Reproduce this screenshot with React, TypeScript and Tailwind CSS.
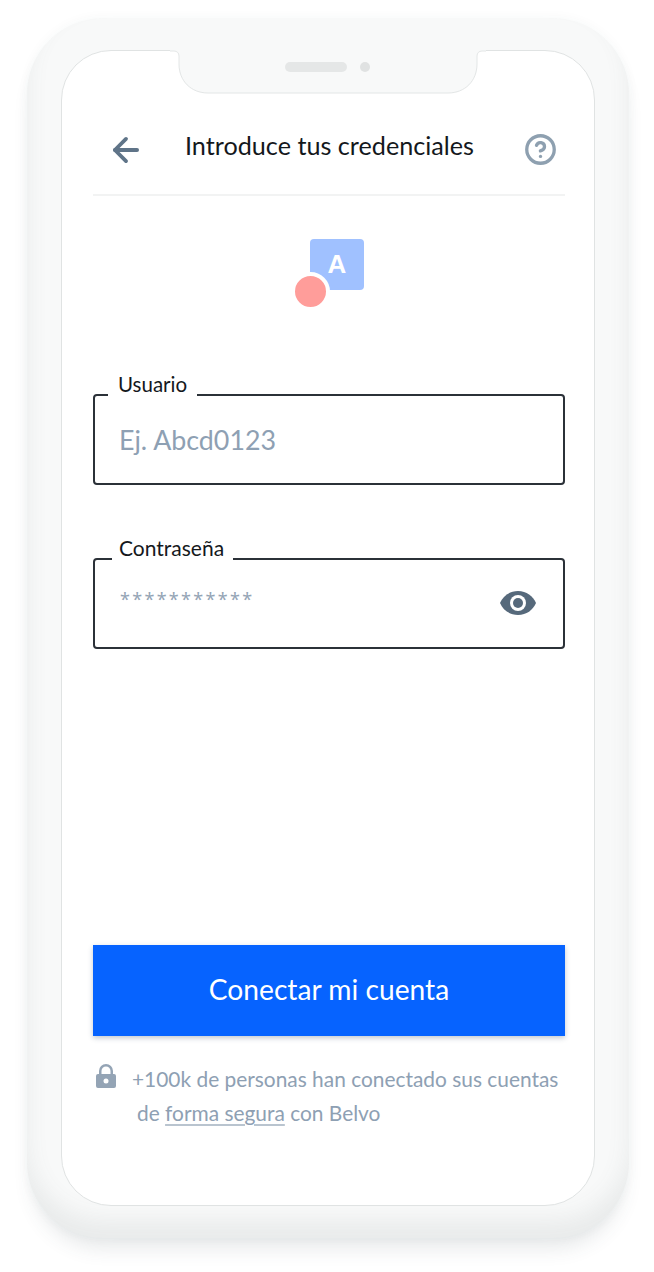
import React from "react";
import { ArrowLeft, CircleHelp } from "lucide-react";

const font = { fontFamily: 'Lato, "Noto Sans", sans-serif' };

function Notch() {
  return (
    <svg
      className="absolute left-[108px] top-[-1px]"
      width="316"
      height="45"
      viewBox="0 0 316 45"
    >
      <path
        d="M0 1H4C7 1 9 3 9 6V14C9 31 21 43 38 43H278C295 43 307 31 307 14V6C307 3 309 1 312 1H316V0H0Z"
        fill="#f8f9f9"
      />
      <path
        d="M0 1H4C7 1 9 3 9 6V14C9 31 21 43 38 43H278C295 43 307 31 307 14V6C307 3 309 1 312 1H316"
        fill="none"
        stroke="#e3e6e6"
        strokeWidth="1"
      />
      <rect x="115" y="12" width="62" height="10" rx="5" fill="#e5e7e7" />
      <circle cx="195" cy="17" r="5" fill="#e0e2e2" />
    </svg>
  );
}

function Field({
  label,
  labelClass,
  children,
}: {
  label: string;
  labelClass: string;
  children: React.ReactNode;
}) {
  return (
    <div className="relative flex h-[91px] items-center justify-between rounded-[4px] border-2 border-[#2b3138] pl-[24px] pr-[26px]">
      <span
        className={`absolute top-[-27px] bg-white leading-[30px] text-[#14181c] ${labelClass}`}
      >
        {label}
      </span>
      {children}
    </div>
  );
}

export default function App() {
  return (
    <div className="h-[1272px] w-[654px] bg-white pl-[27px] pt-[18px]" style={font}>
      <div className="h-[1220px] w-[602px] rounded-[76px] bg-[#f8f9f9] px-[34px] pb-[32px] pt-[32px] shadow-[0_16px_20px_-6px_rgba(60,70,80,0.12),0_0_12px_rgba(60,70,80,0.04),inset_0_-18px_22px_rgba(90,100,105,0.09)]">
        <div className="relative flex h-[1156px] flex-col rounded-[50px] border border-[#e0e3e3] bg-white pl-[31px] pr-[29px]">
          <Notch />

          <header className="mt-[65px] flex h-[80px] items-start justify-between border-b-2 border-[#f2f3f3] pl-[14px] pr-[8px]">
            <ArrowLeft className="mt-[15px] h-[38px] w-[38px] text-[#5f7488]" strokeWidth={2.4} />
            <h1 className="mr-[10px] mt-[9px] text-[25.2px] leading-[40px] text-[#14181c]">
              Introduce tus credenciales
            </h1>
            <CircleHelp className="mt-[17px] h-[33px] w-[33px] text-[#8ea0b0]" strokeWidth={2.4} />
          </header>

          <div className="relative ml-[201px] mt-[43px] h-[68px] w-[70px]">
            <div className="ml-[16px] flex h-[51px] w-[54px] items-center justify-center rounded-[4px] bg-[#a0c1ff] font-['Liberation_Sans'] text-[26px] font-bold text-white">
              A
            </div>
            <div className="absolute bottom-[-4px] left-[-3px] h-[39px] w-[39px] rounded-full border-[4px] border-white bg-[#ff9d9a]" />
          </div>

          <div className="mt-[87px]">
            <Field label="Usuario" labelClass="left-[13px] pl-[10px] pr-[10px] text-[20.5px]">
              <span className="mt-[2px] text-[26.8px] text-[#8ea0b3]">Ej. Abcd0123</span>
            </Field>
          </div>

          <div className="mt-[73px]">
            <Field label="Contraseña" labelClass="left-[17px] pl-[7px] pr-[9px] text-[21px]">
              <span className="mb-[8px] ml-[1px] font-['Noto_Sans'] text-[18px] tracking-[2.3px] text-[#94a4b5]">***********</span>
              <svg width="38" height="26" viewBox="0 0 38 26" className="mt-[-2px]">
                <path
                  d="M19 1C10.5 1 4 6 1 13c3 7 9.500 12 18 12s15-5 18-12C34 6 27.500 1 19 1Z"
                  fill="#56697b"
                />
                <circle cx="19" cy="13" r="8" fill="#fff" />
                <circle cx="19" cy="13" r="5" fill="#56697b" />
              </svg>
            </Field>
          </div>

          <button className="mt-[296px] h-[91px] w-full bg-[#0663ff] pb-[2px] text-[28.2px] text-white shadow-[0_2px_5px_rgba(40,60,90,0.28)]">
            Conectar mi cuenta
          </button>

          <div className="mt-[26px] flex items-start whitespace-nowrap text-[20.9px] leading-[34px] text-[#8ea0b3]">
            <svg width="20" height="26" viewBox="0 0 20 26" className="ml-[3px] mt-[2px] shrink-0">
              <path
                d="M3 10V7a7 7 0 0 1 14 0v3h1a2 2 0 0 1 2 2v10a2 2 0 0 1-2 2H2a2 2 0 0 1-2-2V12a2 2 0 0 1 2-2ZM5.500 10h9V7a4.500 4.500 0 0 0-9 0Z"
                fill="#94a4b5"
              />
              <circle cx="10" cy="17" r="2.500" fill="#fff" />
            </svg>
            <p className="ml-[16px]">
              +100k de personas han conectado sus cuentas
              <br />
              <span className="ml-[5px]">
                de <span className="underline decoration-[#b9c4cf] underline-offset-[3px]">forma segura</span> con Belvo
              </span>
            </p>
          </div>
        </div>
      </div>
    </div>
  );
}
